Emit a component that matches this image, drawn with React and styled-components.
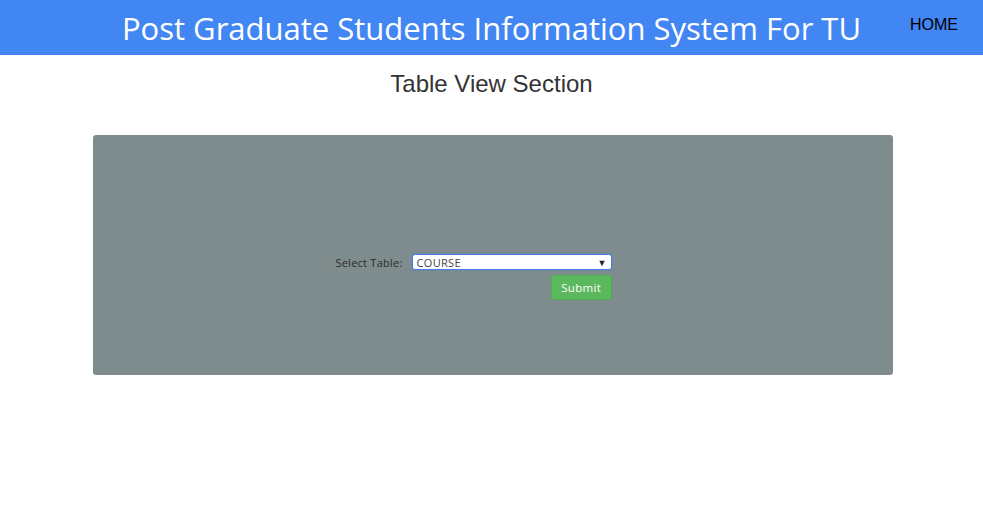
import React from "react";
import styled, { createGlobalStyle } from "styled-components";

const Global = createGlobalStyle`
  html, body { margin: 0; padding: 0; background: #fff; }
  body { font-family: "Liberation Sans", Arial, sans-serif; }
  * { box-sizing: border-box; }
`;

const Header = styled.header`
  height: 55px;
  background: #4286f4;
  display: grid;
  grid-template-columns: 1fr auto 1fr;
  align-items: center;
`;

const Title = styled.h1`
  grid-column: 2;
  margin: 0;
  font-family: "Open Sans", "Noto Sans", sans-serif;
  font-weight: 400;
  font-size: 31px;
  color: #fff;
  white-space: nowrap;
  padding-top: 1px;
`;

const NavLink = styled.a`
  grid-column: 3;
  justify-self: end;
  align-self: start;
  margin-top: 16px;
  margin-right: 25px;
  font-family: "Liberation Sans", Arial, sans-serif;
  font-size: 16px;
  color: #000;
  text-decoration: none;
`;

const SectionTitle = styled.h2`
  margin: 15px 0 0;
  text-align: center;
  font-family: "Liberation Sans", Arial, sans-serif;
  font-weight: 400;
  font-size: 24px;
  line-height: 28px;
  color: #333;
`;

const Panel = styled.div`
  width: 800px;
  height: 240px;
  margin: 37px auto 0;
  transform: translateX(1px);
  background: #7f8c8d;
  border-radius: 3px;
  display: flex;
  justify-content: center;
  padding: 119px 38px 0 0;
`;

const Form = styled.form`
  display: grid;
  grid-template-columns: auto 200px;
  column-gap: 9px;
  row-gap: 5px;
  align-items: center;
  align-self: start;
  font-family: "Open Sans", "Noto Sans", sans-serif;
`;

const Label = styled.label`
  font-size: 11px;
  letter-spacing: 0.25px;
  color: #2b2b2b;
`;

const Select = styled.div`
  height: 16px;
  background: #fff;
  border: 1px solid #4a7fe0;
  border-radius: 3px;
  box-shadow: 0 0 0 1px rgba(74, 127, 224, 0.35);
  display: flex;
  align-items: center;
  justify-content: space-between;
  padding: 0 4px 0 4px;
  font-size: 11px;
  letter-spacing: 0.3px;
  color: #444;
`;

const Arrow = styled.span`
  font-size: 9px;
  color: #222;
`;

const Submit = styled.button`
  grid-column: 2;
  justify-self: end;
  width: 61px;
  height: 25px;
  background: #5cb85c;
  border: 1px solid #4cae4c;
  border-radius: 2px;
  color: #fff;
  font-family: "Open Sans", "Noto Sans", sans-serif;
  font-size: 11.5px;
  letter-spacing: 0.3px;
  padding: 0;
`;

export default function App() {
  return (
    <>
      <Global />
      <Header>
        <Title>Post Graduate Students Information System For TU</Title>
        <NavLink href="#">HOME</NavLink>
      </Header>
      <SectionTitle>Table View Section</SectionTitle>
      <Panel>
        <Form onSubmit={(e) => e.preventDefault()}>
          <Label>Select Table:</Label>
          <Select>
            <span>COURSE</span>
            <Arrow>▼</Arrow>
          </Select>
          <Submit type="submit">Submit</Submit>
        </Form>
      </Panel>
    </>
  );
}
